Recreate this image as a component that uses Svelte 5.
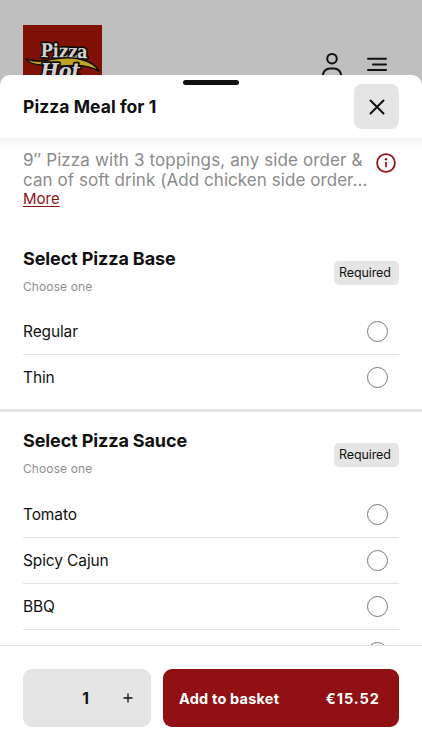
<script lang="ts">
  interface Group { title: string; hint: string; options: string[]; }

  const groups: Group[] = [
    { title: 'Select Pizza Base', hint: 'Choose one', options: ['Regular', 'Thin'] },
    { title: 'Select Pizza Sauce', hint: 'Choose one', options: ['Tomato', 'Spicy Cajun', 'BBQ', ''] },
  ];

  const price = 15.52;
  let quantity = $state(1);
  let picked = $state<Record<string, number>>({});

  const total = $derived((price * quantity).toFixed(2));
</script>

<div class="screen">
  <div class="topbar">
    <svg class="logo" width="79" height="50" viewBox="0 0 79 50">
      <rect width="79" height="50" fill="#7f1106"/>
      <text class="logo-text" x="17.500" y="32" textLength="47" lengthAdjust="spacingAndGlyphs" transform="rotate(1.500 18 32)">Pizza</text>
      <path d="M3 34c7 2 13 3 20 1.500 13-3 28-3.500 37-.500 8 2 13 6 16 11-7-4-15-5.500-24-5.500-13 0-26 2-35-.500C10 39 5 37.500 3 34z" fill="#c0a41f" stroke="#120d08" stroke-width="1.500" stroke-linejoin="round"/>
      <text class="logo-text slanted" x="17.500" y="53" textLength="40" lengthAdjust="spacingAndGlyphs">Hot</text>
    </svg>
    <div class="nav">
      <svg width="22" height="28" viewBox="0 0 22 28" fill="none" stroke="#111" stroke-width="2">
        <circle cx="11" cy="6.700" r="4.800"/>
        <path d="M1.900 27v-3.500a7 7 0 0 1 7-7h4.200a7 7 0 0 1 7 7V27"/>
      </svg>
      <svg class="menu" width="20" height="15" viewBox="0 0 20 15" fill="none" stroke="#111" stroke-width="2" stroke-linecap="round">
        <path d="M1 1.700h18M6 7.400h13M1 13h18"/>
      </svg>
    </div>
  </div>

  <div class="sheet" role="dialog" aria-label="Pizza Meal for 1">
    <div class="grabber"></div>
    <header class="header">
      <h1>Pizza Meal for 1</h1>
      <button class="close" aria-label="Close">
        <svg width="16" height="16" viewBox="0 0 16 16" fill="none" stroke="#111" stroke-width="2" stroke-linecap="round">
          <path d="M1.500 1.500l13 13M14.500 1.500l-13 13"/>
        </svg>
      </button>
    </header>

    <div class="body">
      <div class="intro">
        <div class="intro-text">
          <div class="first">9″ Pizza with 3 toppings, any side order &amp;</div>
          <div class="second">can of soft drink (Add chicken side order...</div>
          <button class="more">More</button>
        </div>
        <svg class="info" width="20" height="20" viewBox="0 0 20 20" fill="none" stroke="#941014">
          <circle cx="10" cy="10" r="8.900" stroke-width="1.800"/>
          <path d="M10 9v5.200" stroke-width="1.700"/>
          <circle cx="10" cy="6.300" r="1.200" fill="#941014" stroke="none"/>
        </svg>
      </div>

      {#each groups as group}
        <section class="group">
          <div class="group-head">
            <div>
              <h2>{group.title}</h2>
              <p class="hint">{group.hint}</p>
            </div>
            <span class="badge">Required</span>
          </div>
          {#each group.options as option, i}
            <button class="option" onclick={() => (picked[group.title] = i)}>
              <span>{option}</span>
              <span class="radio" class:on={picked[group.title] === i}></span>
            </button>
          {/each}
        </section>
      {/each}
    </div>

    <footer class="footer">
      <div class="stepper">
        <span class="count">{quantity}</span>
        <button class="plus" aria-label="Add one" onclick={() => quantity++}>
          <svg width="10" height="10" viewBox="0 0 10 10" stroke="#111" stroke-width="1.300">
            <path d="M5 .5v9M.5 5h9"/>
          </svg>
        </button>
      </div>
      <button class="add">
        <span class="add-label">Add to basket</span>
        <span class="add-price">€{total}</span>
      </button>
    </footer>
  </div>
</div>

<style>
  :global(body) { margin: 0; overflow: hidden; }
  .screen {
    display: flex;
    flex-direction: column;
    width: 422px;
    height: 750px;
    overflow: hidden;
    background: #bfbfbf;
    color: #111;
    font-family: Inter, "Liberation Sans", sans-serif;
  }
  button {
    margin: 0;
    padding: 0;
    border: none;
    background: none;
    color: inherit;
    font: inherit;
    cursor: pointer;
  }
  .topbar {
    display: flex;
    flex-shrink: 0;
    justify-content: space-between;
    height: 75px;
    padding: 0 35px 0 23px;
  }
  .logo { margin-top: 25px; }
  .logo-text {
    font: 700 19px "DejaVu Serif", serif;
    fill: #d2d2d2;
    stroke: #120d08;
    stroke-width: 3.5px;
    stroke-linejoin: round;
    paint-order: stroke;
  }
  .logo-text.slanted { font-style: italic; font-size: 20px; }
  .nav {
    display: flex;
    align-items: flex-start;
    gap: 24px;
    padding-top: 52px;
  }
  .menu { margin-top: 5px; }

  .sheet {
    position: relative;
    display: flex;
    flex: 1;
    flex-direction: column;
    min-height: 0;
    border-radius: 10px 10px 0 0;
    background: #fff;
  }
  .grabber {
    position: absolute;
    top: 5px;
    left: 183px;
    width: 56px;
    height: 5px;
    border-radius: 3px;
    background: #111;
  }
  .header {
    display: flex;
    flex-shrink: 0;
    align-items: center;
    justify-content: space-between;
    height: 63px;
    padding: 0 23px;
  }
  h1 {
    margin: 0;
    font-size: 17.5px;
    font-weight: 650;
    letter-spacing: 0.05px;
  }
  .close {
    display: flex;
    align-items: center;
    justify-content: center;
    width: 45px;
    height: 45px;
    border-radius: 8px;
    background: #e5e5e5;
  }
  .body {
    flex: 1;
    min-height: 0;
    overflow: hidden;
    background: linear-gradient(#f3f3f3, #fff 10px);
  }
  .intro {
    display: flex;
    justify-content: space-between;
    height: 92px;
    padding: 12px 26px 0 23px;
    box-sizing: border-box;
  }
  .intro-text {
    color: #8b8b8b;
    font-size: 17px;
    line-height: 20px;
    white-space: nowrap;
  }
  .first { letter-spacing: 0.11px; }
  .second { letter-spacing: 0.06px; }
  .more {
    display: block;
    color: #941014;
    font-size: 15px;
    line-height: 18px;
    text-decoration: underline;
    text-underline-offset: 2px;
  }
  .info {
    flex-shrink: 0;
    margin-top: 3px;
  }
  .group + .group {
    margin-top: 8px;
    border-top: 3px solid #e5e5e5;
  }
  .group-head {
    display: flex;
    justify-content: space-between;
    height: 79px;
    padding: 18px 23px 0;
    box-sizing: border-box;
  }
  .group + .group .group-head { height: 80px; }
  h2 {
    margin: 0;
    font-size: 18px;
    font-weight: 650;
    line-height: 22px;
    letter-spacing: -0.12px;
  }
  .hint {
    margin: 9px 0 0;
    color: #8f8f8f;
    font-size: 12px;
    line-height: 16px;
    letter-spacing: 0.1px;
  }
  .badge {
    width: 65px;
    height: 24px;
    margin-top: 13px;
    padding-left: 5px;
    box-sizing: border-box;
    border-radius: 5px;
    background: #e5e5e5;
    font-size: 12.5px;
    line-height: 23px;
    letter-spacing: -0.1px;
  }
  .option {
    display: flex;
    align-items: center;
    justify-content: space-between;
    width: 376px;
    height: 46px;
    margin: 0 23px;
    padding-right: 11px;
    border-bottom: 1px solid #e1e1e1;
    font-size: 15.5px;
    letter-spacing: -0.12px;
  }
  .group:first-of-type .option:last-child { border-color: transparent; }
  .radio {
    width: 21px;
    height: 21px;
    box-sizing: border-box;
    border: 1px solid #777;
    border-radius: 50%;
  }
  .radio.on { border: 6px solid #941014; }

  .footer {
    display: flex;
    flex-shrink: 0;
    gap: 12px;
    height: 105px;
    padding: 23px 23px 0;
    box-sizing: border-box;
    border-top: 1px solid #e1e1e1;
  }
  .stepper {
    display: flex;
    align-items: center;
    justify-content: flex-end;
    width: 128px;
    height: 58px;
    padding-right: 18px;
    box-sizing: border-box;
    border-radius: 9px;
    background: #e5e5e5;
  }
  .count {
    margin-right: 34px;
    font-size: 15.5px;
    font-weight: 700;
  }
  .plus { display: flex; }
  .add {
    display: flex;
    flex: 1;
    align-items: center;
    justify-content: space-between;
    height: 58px;
    padding: 0 19px 0 16px;
    border-radius: 9px;
    background: #901013;
    color: #fff;
    font-size: 14.5px;
    font-weight: 650;
  }
  .add-label { letter-spacing: 0.2px; }
  .add-price { letter-spacing: 1px; }
</style>
